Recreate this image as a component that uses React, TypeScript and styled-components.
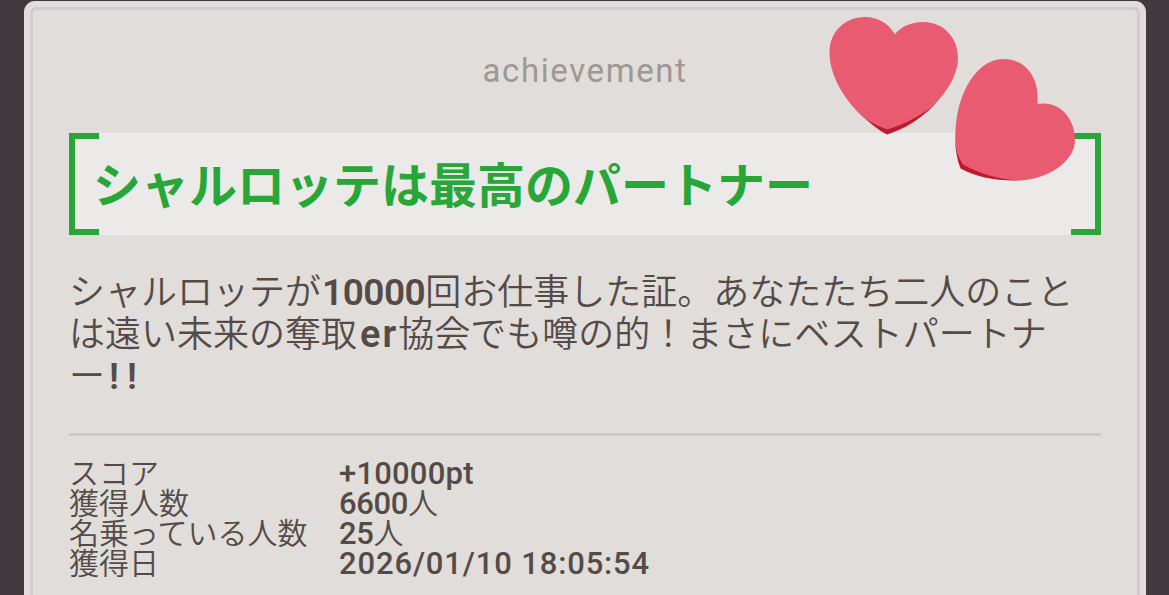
import React from "react";
import styled, {createGlobalStyle} from "styled-components";

const GlobalStyles = createGlobalStyle`
    *{
        box-sizing: border-box;
    }
    body{
        margin: 0;
        background-color: #403a3e;
        color: #544b48;
        font-family: "Noto Sans CJK JP", sans-serif;
        font-weight: 350;
        overflow: hidden;
    }
`

const PageStyles = styled.main`
    height: 595px;
    padding: 1px 23px 0 24px;
    overflow: hidden;
`

const CardFrame = styled.div`
    position: relative;
    height: 640px;
    padding: 6px;
    border-radius: 11px;
    background-color: #e2dddd;
`

const CardBody = styled.article`
    display: flex;
    flex-direction: column;
    height: 100%;
    padding: 0 36px;
    border: 3px solid #d1ccc9;
    border-radius: 6px;
    background-color: #e0ddda;
`

const Category = styled.div`
    height: 123px;
    padding-top: 4px;
    line-height: 122px;
    text-align: center;
    color: #9f9794;
`

const Title = styled.h1`
    display: flex;
    justify-content: space-between;
    height: 102px;
    margin: 0;
    background-color: #ebeae8;
    color: #28a637;
    font-size: 48px;
    font-weight: 700;
    line-height: 99px;
    white-space: nowrap;
`

const Bracket = styled.span<{$side: "left" | "right"}>`
    width: 30px;
    border: 6px solid #28a637;
    border-${({$side})=> $side === "left" ? "right" : "left"}: none;
`

const TitleText = styled.span`
    flex: 1;
    margin-left: -6px;
`

const Description = styled.p`
    height: 126px;
    margin: 33px 0 39px;
    font-size: 36px;
    line-height: 42px;
`

const Latin = styled.span<{$size: number, $spacing?: number, $weight?: number, $indent?: number}>`
    padding-left: ${({$indent = 0})=> $indent}px;
    font-family: Roboto, "Liberation Sans", sans-serif;
    font-size: ${({$size})=> $size}px;
    font-weight: ${({$weight = 500})=> $weight};
    letter-spacing: ${({$spacing = 0})=> $spacing}px;
    line-height: 0;
`

const Divider = styled.hr`
    width: 100%;
    height: 3px;
    margin: 0 0 20px;
    border: none;
    background-color: #cdc9c6;
`

const Details = styled.dl`
    display: grid;
    grid-template-columns: 270px 1fr;
    grid-auto-rows: 30px;
    margin: 0;
    font-size: 30px;
    line-height: 30px;
    white-space: nowrap;
    dd{
        margin: 0;
    }
`

const HeartsIcon = styled.svg`
    position: absolute;
    left: 800px;
    top: 11px;
    width: 256px;
    height: 174px;
`

const Hearts = ()=>{
    return (<HeartsIcon viewBox="824 12 256 174">
                <path fill="#be1931" d="M850 100L864 117.5C872 125 880 131 887 134.5C902 130 920 120 934 105L940 96Z"/>
                <path fill="#e85b70" d="M895 34.5C889 24 878 17 865 17C844 17 829.5 33 829.5 52C829.5 79 848 103 864 118C872 123 880 127 887 129.5C902 125 920 117 934 105C946 93 958 75 958 58C958 37 943 22 923 22C911 22 900 27 895 34.5Z"/>
                <path fill="#be1931" d="M955.3 143C956 153 957.5 161 960.5 168.5C976 177 995 181 1018 180.5L1000 160Z"/>
                <path fill="#e85b70" d="M1037.3 104C1040 78 1026 59 1003 59C986 59 972 74 964 92C957 108 955 125 955.3 143C956 151 958.5 158 963 164.5C980 174 998 179 1018 180.5C1047 180 1075 162 1075 140C1075 118 1060 103 1043 103.5C1041 103.5 1039 103.7 1037.3 104Z"/>
            </HeartsIcon>)
}

const App = ()=>{
    return (<PageStyles>
                <GlobalStyles/>
                <CardFrame>
                    <CardBody>
                        <Category><Latin $size={33} $spacing={1.6} $weight={400}>achievement</Latin></Category>
                        <Title>
                            <Bracket $side="left"/>
                            <TitleText>シャルロッテは最高のパートナー</TitleText>
                            <Bracket $side="right"/>
                        </Title>
                        <Description>
                            シャルロッテが<Latin $size={37} $spacing={-0.5} $weight={600} $indent={1}>10000</Latin>回お仕事した証。あなたたち二人のことは遠い未来の奪取<Latin $size={38} $spacing={2} $weight={600} $indent={3}>er</Latin>協会でも噂の的！まさにベストパートナー<Latin $size={37} $spacing={8} $weight={600} $indent={4}>!!</Latin>
                        </Description>
                        <Divider/>
                        <Details>
                            <dt>スコア</dt>
                            <dd><Latin $size={31} $spacing={0.2}>+10000pt</Latin></dd>
                            <dt>獲得人数</dt>
                            <dd><Latin $size={31} $spacing={-0.4}>6600</Latin>人</dd>
                            <dt>名乗っている人数</dt>
                            <dd><Latin $size={31} $spacing={-0.4}>25</Latin>人</dd>
                            <dt>獲得日</dt>
                            <dd><Latin $size={31} $spacing={0.85}>2026/01/10 18:05:54</Latin></dd>
                        </Details>
                    </CardBody>
                    <Hearts/>
                </CardFrame>
            </PageStyles>)
}

export default App;
